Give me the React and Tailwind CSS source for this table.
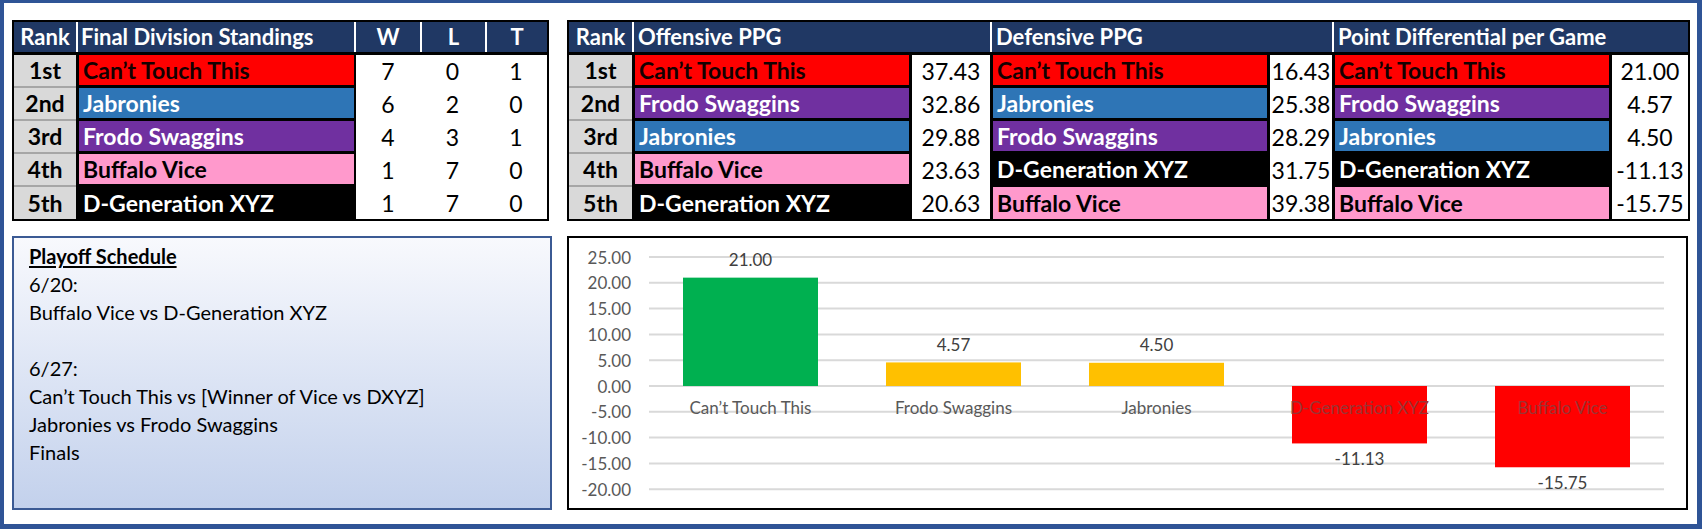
import { Fragment } from "react";

const TEAM = {
  ctt: { name: "Can’t Touch This", cls: "bg-[#ff0000] text-[#140000]" },
  jab: { name: "Jabronies", cls: "bg-[#2e75b6] text-white" },
  frodo: { name: "Frodo Swaggins", cls: "bg-[#7030a0] text-white" },
  buf: { name: "Buffalo Vice", cls: "bg-[#ff99cc] text-black" },
  dgen: { name: "D-Generation XYZ", cls: "bg-black text-white" },
};

const RANKS = ["1st", "2nd", "3rd", "4th", "5th"];

const standings = [
  { team: "ctt", w: 7, l: 0, t: 1 },
  { team: "jab", w: 6, l: 2, t: 0 },
  { team: "frodo", w: 4, l: 3, t: 1 },
  { team: "buf", w: 1, l: 7, t: 0 },
  { team: "dgen", w: 1, l: 7, t: 0 },
];

const offense = [
  ["ctt", "37.43"],
  ["frodo", "32.86"],
  ["jab", "29.88"],
  ["buf", "23.63"],
  ["dgen", "20.63"],
];
const defense = [
  ["ctt", "16.43"],
  ["jab", "25.38"],
  ["frodo", "28.29"],
  ["dgen", "31.75"],
  ["buf", "39.38"],
];
const diff = [
  ["ctt", "21.00"],
  ["frodo", "4.57"],
  ["jab", "4.50"],
  ["dgen", "-11.13"],
  ["buf", "-15.75"],
];

// chart data, same order as the bars
const bars = [
  { label: "Can’t Touch This", value: 21.0, color: "#00b050" },
  { label: "Frodo Swaggins", value: 4.57, color: "#ffc000" },
  { label: "Jabronies", value: 4.5, color: "#ffc000" },
  { label: "D-Generation XYZ", value: -11.13, color: "#ff0000" },
  { label: "Buffalo Vice", value: -15.75, color: "#ff0000" },
];

const RankCell = ({ last, children }) => (
  <div
    className={`flex items-center justify-center bg-[#d9d9d9] text-[23px] font-bold text-black ${
      last ? "h-[32px]" : "h-[33px] border-b-2 border-[#a6a6a6]"
    }`}
  >
    {children}
  </div>
);

const NameCell = ({ team, last }) => (
  <div
    className={`flex items-center whitespace-nowrap border-l-[3px] border-r-[3px] border-black pl-[4px] text-[23px] font-bold ${
      TEAM[team].cls
    } ${last ? "h-[32px]" : "h-[33px] border-b-[3px]"}`}
  >
    {TEAM[team].name}
  </div>
);

const ValueCell = ({ children, last }) => (
  <div
    className={`flex items-center justify-center bg-white text-[23px] text-black ${
      last ? "h-[32px]" : "h-[33px]"
    }`}
  >
    {children}
  </div>
);

const StandingsTable = () => (
  <div className="w-[537px] border-2 border-black bg-black text-[22px] leading-none">
    <div className="mb-[3px] grid h-[30px] grid-cols-[62px_278px_66px_65px_62px] bg-[#203864] font-bold text-white">
      <div className="flex items-center justify-center">Rank</div>
      <div className="flex items-center border-l-2 border-white pl-[3px]">Final Division Standings</div>
      <div className="flex items-center justify-center border-l-2 border-white">W</div>
      <div className="flex items-center justify-center border-l-2 border-white">L</div>
      <div className="flex items-center justify-center border-l-2 border-white">T</div>
    </div>
    <div className="grid grid-cols-[62px_280px_64px_65px_62px]">
      {standings.map((row, i) => {
        const last = i === standings.length - 1;
        return (
          <Fragment key={row.team}>
            <RankCell last={last}>{RANKS[i]}</RankCell>
            <div
              className={`flex items-center border-l-[3px] border-r-2 border-black pl-[4px] text-[23px] font-bold ${
                TEAM[row.team].cls
              } ${last ? "h-[32px]" : "h-[33px] border-b-[3px]"}`}
            >
              {TEAM[row.team].name}
            </div>
            <ValueCell last={last}>{row.w}</ValueCell>
            <ValueCell last={last}>{row.l}</ValueCell>
            <ValueCell last={last}>{row.t}</ValueCell>
          </Fragment>
        );
      })}
    </div>
  </div>
);

const PpgTable = () => (
  <div className="w-[1123px] border-2 border-black bg-black text-[22px] leading-none">
    <div className="mb-[3px] grid h-[30px] grid-cols-[63px_280px_78px_280px_62px_280px_76px] bg-[#203864] font-bold text-white">
      <div className="flex items-center justify-center">Rank</div>
      <div className="col-span-2 flex items-center border-l-2 border-white pl-[4px]">Offensive PPG</div>
      <div className="col-span-2 flex items-center border-l-2 border-white pl-[4px]">Defensive PPG</div>
      <div className="col-span-2 flex items-center border-l-2 border-white pl-[4px]">
        Point Differential per Game
      </div>
    </div>
    <div className="grid grid-cols-[63px_280px_78px_280px_62px_280px_76px]">
      {RANKS.map((rank, i) => {
        const last = i === RANKS.length - 1;
        return (
          <Fragment key={rank}>
            <RankCell last={last}>{rank}</RankCell>
            <NameCell team={offense[i][0]} last={last} />
            <ValueCell last={last}>{offense[i][1]}</ValueCell>
            <NameCell team={defense[i][0]} last={last} />
            <ValueCell last={last}>{defense[i][1]}</ValueCell>
            <NameCell team={diff[i][0]} last={last} />
            <ValueCell last={last}>{diff[i][1]}</ValueCell>
          </Fragment>
        );
      })}
    </div>
  </div>
);

const PlayoffBox = () => (
  <div className="h-[274px] w-[540px] border-2 border-[#3b5a94] bg-linear-to-b from-[#f8f9fd] to-[#c3d1ec] pl-[15px] pt-[4px] text-[20px] leading-[28px] text-black">
    <div className="font-bold underline underline-offset-2">Playoff Schedule</div>
    <div>6/20:</div>
    <div>Buffalo Vice vs D-Generation XYZ</div>
    <div className="h-[28px]" />
    <div>6/27:</div>
    <div>Can’t Touch This vs [Winner of Vice vs DXYZ]</div>
    <div>Jabronies vs Frodo Swaggins</div>
    <div>Finals</div>
  </div>
);

const DiffChart = () => {
  const zeroY = 148;
  const unit = 5.16;
  const left = 80;
  const right = 1095;
  const step = 203;
  const barW = 135;
  const ticks = [25, 20, 15, 10, 5, 0, -5, -10, -15, -20];
  const y = (v) => zeroY - v * unit;

  return (
    <div className="h-[274px] w-[1121px] border-2 border-black bg-white">
      <svg width="1117" height="270" className="block" fontFamily="Lato, sans-serif" fontSize="17">
        {ticks.map((t) => (
          <g key={t}>
            <line x1={left} x2={right} y1={y(t)} y2={y(t)} stroke="#d9d9d9" strokeWidth="2" />
            <text x="62" y={y(t)} textAnchor="end" dominantBaseline="central" fill="#595959">
              {t.toFixed(2)}
            </text>
          </g>
        ))}
        {bars.map((b, i) => {
          const x = left + 34 + step * i;
          const cx = x + barW / 2;
          const top = b.value >= 0 ? y(b.value) : zeroY;
          const h = Math.abs(b.value) * unit;
          return (
            <g key={b.label}>
              <rect x={x} y={top} width={barW} height={h} fill={b.color} />
              <text
                x={cx}
                y={b.value >= 0 ? top - 18 : top + h + 15}
                textAnchor="middle"
                dominantBaseline="central"
                fill="#404040"
              >
                {b.value.toFixed(2)}
              </text>
              <text
                x={cx}
                y="169"
                textAnchor="middle"
                dominantBaseline="central"
                fill={b.value >= 0 ? "#595959" : "#9b3434"}
              >
                {b.label}
              </text>
            </g>
          );
        })}
      </svg>
    </div>
  );
};

export default function App() {
  return (
    <div className="box-border h-[529px] w-[1702px] border-b-[5px] border-l-4 border-r-[5px] border-t-[3px] border-[#2f5496] bg-white pl-[8px] pt-[17px] font-['Lato',sans-serif]">
      <div className="flex gap-[18px]">
        <StandingsTable />
        <PpgTable />
      </div>
      <div className="mt-[15px] flex gap-[15px]">
        <PlayoffBox />
        <DiffChart />
      </div>
    </div>
  );
}
